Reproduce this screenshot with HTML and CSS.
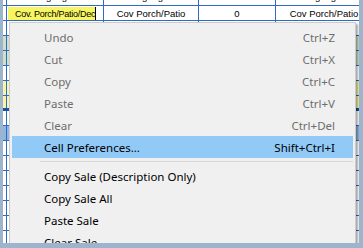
FILE: index.html
```html
<!DOCTYPE html>
<html>
<head>
  <title>Sale Grid - Context Menu</title>
  <link rel="stylesheet" href="styles.css">
</head>
<body>
  <div class="frame">
    <div class="sheet">
      <div class="rows">
        <div class="row cut">
          <div class="cell col-a"></div>
          <div class="cell col-b">Signage</div>
          <div class="cell col-c">Signage</div>
          <div class="cell col-d">0</div>
          <div class="cell col-e">Signage</div>
        </div>
        <div class="row">
          <div class="cell col-a"></div>
          <div class="cell col-b"><span class="editor">Cov. Porch/Patio/Deck</span></div>
          <div class="cell col-c">Cov Porch/Patio</div>
          <div class="cell col-d">0</div>
          <div class="cell col-e">Cov Porch/Patio</div>
        </div>
        <div class="row"><div class="cell col-a"></div><div class="cell col-b"></div><div class="cell col-c"></div><div class="cell col-d"></div><div class="cell col-e"></div></div>
        <div class="row green"><div class="cell col-a"></div><div class="cell col-b"></div><div class="cell col-c"></div><div class="cell col-d"></div><div class="cell col-e"></div></div>
        <div class="row green"><div class="cell col-a"></div><div class="cell col-b"></div><div class="cell col-c"></div><div class="cell col-d"></div><div class="cell col-e"></div></div>
        <div class="row"><div class="cell col-a"></div><div class="cell col-b"></div><div class="cell col-c"></div><div class="cell col-d"></div><div class="cell col-e"></div></div>
        <div class="row yellow"><div class="cell col-a"></div><div class="cell col-b"></div><div class="cell col-c"></div><div class="cell col-d"></div><div class="cell col-e"></div></div>
        <div class="row yellow total"><div class="cell col-a"></div><div class="cell col-b"></div><div class="cell col-c"></div><div class="cell col-d"></div><div class="cell col-e"></div></div>
        <div class="row"><div class="cell col-a"></div><div class="cell col-b"></div><div class="cell col-c"></div><div class="cell col-d"></div><div class="cell col-e"></div></div>
        <div class="row blue"><div class="cell col-a"></div><div class="cell col-b"></div><div class="cell col-c"></div><div class="cell col-d"></div><div class="cell col-e"></div></div>
        <div class="row"><div class="cell col-a"></div><div class="cell col-b"></div><div class="cell col-c"></div><div class="cell col-d"></div><div class="cell col-e"></div></div>
        <div class="row"><div class="cell col-a"></div><div class="cell col-b"></div><div class="cell col-c"></div><div class="cell col-d"></div><div class="cell col-e"></div></div>
        <div class="row"><div class="cell col-a"></div><div class="cell col-b"></div><div class="cell col-c"></div><div class="cell col-d"></div><div class="cell col-e"></div></div>
        <div class="row"><div class="cell col-a"></div><div class="cell col-b"></div><div class="cell col-c"></div><div class="cell col-d"></div><div class="cell col-e"></div></div>
        <div class="row"><div class="cell col-a"></div><div class="cell col-b"></div><div class="cell col-c"></div><div class="cell col-d"></div><div class="cell col-e"></div></div>
        <div class="row"><div class="cell col-a"></div><div class="cell col-b"></div><div class="cell col-c"></div><div class="cell col-d"></div><div class="cell col-e"></div></div>
        <div class="row"><div class="cell col-a"></div><div class="cell col-b"></div><div class="cell col-c"></div><div class="cell col-d"></div><div class="cell col-e"></div></div>
      </div>

      <div class="menu">
        <div class="item disabled"><span>Undo</span><span>Ctrl+Z</span></div>
        <div class="item disabled"><span>Cut</span><span>Ctrl+X</span></div>
        <div class="item disabled"><span>Copy</span><span>Ctrl+C</span></div>
        <div class="item disabled"><span>Paste</span><span>Ctrl+V</span></div>
        <div class="item disabled"><span>Clear</span><span>Ctrl+Del</span></div>
        <div class="item active"><span>Cell Preferences...</span><span>Shift+Ctrl+I</span></div>
        <div class="separator"></div>
        <div class="item"><span>Copy Sale (Description Only)</span></div>
        <div class="item"><span>Copy Sale All</span></div>
        <div class="item"><span>Paste Sale</span></div>
        <div class="item"><span>Clear Sale</span></div>
      </div>
    </div>
  </div>
</body>
</html>
```

FILE: styles.css
```css
body {
  margin: 0;
  background-color: #9db4cd;
}

.frame {
  width: 363px;
  height: 248px;
  padding: 0 4px 5px 3px;
  box-sizing: border-box;
}

.sheet {
  position: relative;
  height: 243px;
  overflow: hidden;
  background-color: #fff;
}

.rows {
  margin-top: -9px;
}

.row {
  display: flex;
  height: 14px;
  border-bottom: 1px solid #2f6bc4;
}

.row.cut .cell {
  align-items: flex-start;
}

.row.green {
  background-color: #cfe0c6;
}

.row.yellow {
  background-color: #f7f3a8;
}

.row.blue {
  background-color: #8fb5e0;
}

.row.total {
  border-bottom: 3px solid #1f4f9e;
  height: 12px;
}

.cell {
  flex: none;
  display: flex;
  align-items: center;
  justify-content: center;
  overflow: hidden;
  white-space: nowrap;
  border-right: 1px solid #2f6bc4;
  font-family: "Liberation Sans", Arial, sans-serif;
  font-size: 9.5px;
  color: #000;
}

.col-a {
  width: 3px;
}

.col-b {
  width: 96px;
  justify-content: flex-start;
}

.row.cut .col-b {
  justify-content: center;
}

.col-c {
  width: 94px;
}

.col-d {
  width: 76px;
}

.col-e {
  width: 96px;
}

.editor {
  align-self: stretch;
  display: flex;
  align-items: center;
  width: 80px;
  margin: 1px 0 0 1px;
  padding-left: 7px;
  overflow: hidden;
  background-color: #f8f562;
  border-right: 1px solid #000;
  font-size: 9px;
  letter-spacing: -0.25px;
}

.menu {
  position: absolute;
  left: 6px;
  top: 22px;
  width: 347px;
  padding: 3px 2px;
  box-sizing: border-box;
  background-color: #f0f0f0;
  border: 1px solid #cccccc;
  box-shadow: 2px 2px 2px rgba(0, 0, 0, 0.35);
  font-family: "Noto Sans", sans-serif;
  font-size: 11.5px;
  color: #000;
}

.item {
  display: flex;
  justify-content: space-between;
  align-items: center;
  height: 22px;
  padding: 0 18px 0 32px;
  white-space: nowrap;
}

.item.disabled {
  color: #6d6d6d;
}

.item.active {
  background-color: #91c9f7;
}

.separator {
  height: 1px;
  margin: 3px 0 3px 28px;
  background-color: #d7d7d7;
}
```
